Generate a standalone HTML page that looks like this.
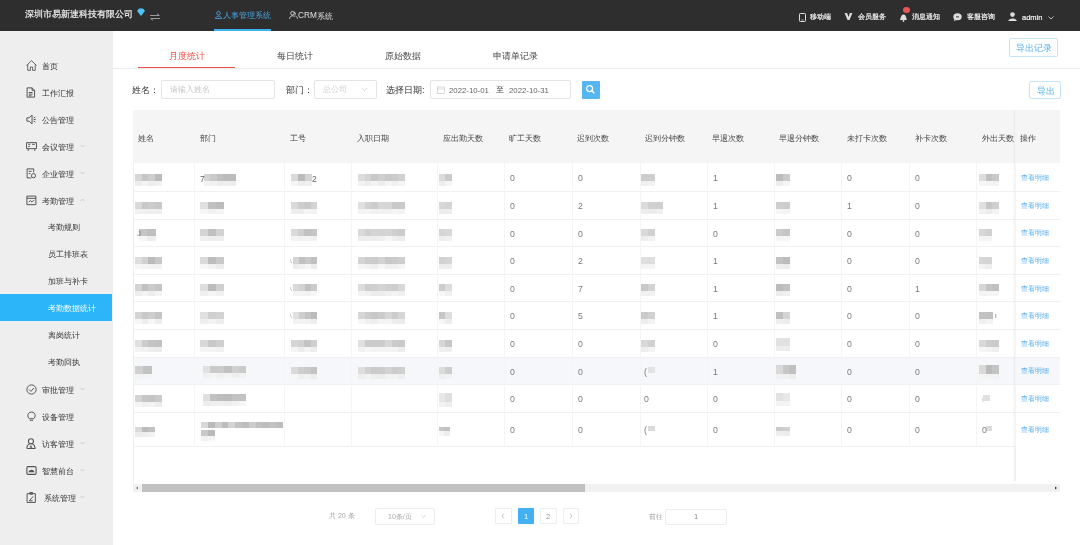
<!DOCTYPE html><html><head><meta charset="utf-8"><style>
html,body{margin:0;padding:0;width:1080px;height:545px;overflow:hidden;background:#fff;font-family:"Liberation Sans",sans-serif;}
.t{position:absolute;white-space:nowrap;will-change:transform;}
.b{position:absolute;box-sizing:border-box;}
svg{position:absolute;overflow:visible;}
.bl{position:absolute;background:#cfcfcf;filter:blur(0.8px);}
#root{position:absolute;left:-3px;top:-3px;width:1086px;height:551px;background:#fff;filter:blur(0.3px);}
#in{position:absolute;left:3px;top:3px;width:1080px;height:545px;}
</style></head><body><div id="root"><div id="in">
<div class="b" style="left:-3px;top:-3px;width:1086px;height:34px;background:#2e2e2e;"></div>
<div class="t" style="left:25px;top:9.40px;font-size:9px;line-height:10.80px;color:#f0f0f0;-webkit-text-stroke:0.2px #f0f0f0;">深圳市易新速科技有限公司</div>
<svg style="left:136px;top:8px" width="10" height="9" viewBox="0 0 10 9"><path d="M1 3 L3 0.5 H7 L9 3 L5 8 Z" fill="#4fc3f7"/></svg>
<svg style="left:149px;top:13px" width="12" height="8" viewBox="0 0 12 8"><path d="M1 2.5 H10 M8 0.8 L10.5 2.5 M11 5.5 H2 M4 7.2 L1.5 5.5" stroke="#9a9a9a" stroke-width="1" fill="none"/></svg>
<svg style="left:214.5px;top:11px" width="7" height="8" viewBox="0 0 7 8"><circle cx="3.5" cy="2.2" r="1.8" stroke="#4aa6e2" stroke-width="0.9" fill="none"/><path d="M0.5 7.5 C0.5 4.5 6.5 4.5 6.5 7.5 Z" stroke="#4aa6e2" stroke-width="0.9" fill="none"/></svg>
<div class="t" style="left:223.2px;top:11.30px;font-size:8px;line-height:9.60px;color:#4aa6e2;">人事管理系统</div>
<div class="b" style="left:214px;top:29px;width:57px;height:2px;background:#3cb2f0;"></div>
<svg style="left:289px;top:11px" width="9" height="8" viewBox="0 0 9 8"><circle cx="3.5" cy="2.2" r="1.8" stroke="#ddd" stroke-width="0.9" fill="none"/><path d="M0.5 7.8 C0.8 4.8 4 4.2 5.5 5.5 M5 1 C6.8 1.2 6.8 3.8 5.5 4.2 M6.5 5 C7.8 5.5 8.5 6.5 8.5 7.8" stroke="#ddd" stroke-width="0.9" fill="none"/></svg>
<div class="t" style="left:297.7px;top:11.02px;font-size:8.3px;line-height:9.96px;color:#e0e0e0;">CRM</div>
<div class="t" style="left:316.5px;top:11.50px;font-size:8px;line-height:9.60px;color:#e0e0e0;">系统</div>
<svg style="left:799px;top:12.5px" width="7" height="9" viewBox="0 0 7 9"><rect x="0.5" y="0.5" width="6" height="8" rx="0.8" stroke="#ddd" stroke-width="1" fill="none"/><line x1="2.5" y1="7" x2="4.5" y2="7" stroke="#ddd" stroke-width="0.8"/></svg>
<div class="t" style="left:810px;top:13.30px;font-size:7px;line-height:8.40px;color:#f2f2f2;-webkit-text-stroke:0.2px #f2f2f2;">移动端</div>
<svg style="left:844px;top:13px" width="9" height="7" viewBox="0 0 10 9"><path d="M0 0 H3.2 L5 5.2 L6.8 0 H10 L6.3 9 H3.7 Z" fill="#ddd"/></svg>
<div class="t" style="left:858px;top:13.30px;font-size:7px;line-height:8.40px;color:#f2f2f2;-webkit-text-stroke:0.2px #f2f2f2;">会员服务</div>
<svg style="left:899px;top:11.5px" width="9" height="10" viewBox="0 0 9 10"><path d="M1 8 C2 6 1.5 3 4.5 2.5 C7.5 3 7 6 8 8 Z" fill="#ddd"/><circle cx="4.5" cy="9" r="0.9" fill="#ddd"/></svg>
<div class="b" style="left:903px;top:6.5px;width:7px;height:6.5px;border-radius:50%;background:#e8545a;"></div>
<div class="t" style="left:912px;top:13.30px;font-size:7px;line-height:8.40px;color:#f2f2f2;-webkit-text-stroke:0.2px #f2f2f2;">消息通知</div>
<svg style="left:953px;top:13px" width="9" height="8" viewBox="0 0 9 8"><ellipse cx="4.5" cy="3.8" rx="4.2" ry="3.5" fill="#ddd"/><path d="M1.5 6 L0.8 8 L3.5 7" fill="#ddd"/><rect x="3" y="3" width="3" height="1.6" fill="#777"/></svg>
<div class="t" style="left:967px;top:13.30px;font-size:7px;line-height:8.40px;color:#f2f2f2;-webkit-text-stroke:0.2px #f2f2f2;">客服咨询</div>
<svg style="left:1008px;top:11.5px" width="9" height="9" viewBox="0 0 9 9"><circle cx="4.5" cy="2.6" r="2.3" fill="#ddd"/><path d="M0.3 9 C0.5 5.5 8.5 5.5 8.7 9 Z" fill="#ddd"/></svg>
<div class="t" style="left:1022px;top:13.30px;font-size:7.5px;line-height:9.00px;color:#f2f2f2;-webkit-text-stroke:0.2px #f2f2f2;">admin</div>
<svg style="left:1048px;top:15.5px" width="6" height="4" viewBox="0 0 6 4"><path d="M0.5 0.5 L3 3 L5.5 0.5" stroke="#ccc" stroke-width="0.9" fill="none"/></svg>
<div class="b" style="left:-3px;top:31px;width:116px;height:517px;background:#eeeeee;"></div>
<svg style="left:26px;top:60px" width="11" height="11" viewBox="0 0 10 10"><path d="M0.4 5 L5 0.6 L9.6 5 M1.6 3.9 V9.4 H4 V6.4 H6 V9.4 H8.4 V3.9" stroke="#555" stroke-width="0.8" fill="none" stroke-linejoin="miter"/></svg>
<div class="t" style="left:42px;top:61.70px;font-size:8px;line-height:9.60px;color:#333;">首页</div>
<svg style="left:26px;top:87px" width="11" height="11" viewBox="0 0 10 10"><path d="M1 0.8 H5.5 L7.8 3 V9.2 H1 Z M5.5 0.8 V3 H7.8 M2.5 5 H6 M2.5 6.5 H6 M2.5 8 H5" stroke="#555" stroke-width="0.9" fill="none"/></svg>
<div class="t" style="left:42px;top:88.70px;font-size:8px;line-height:9.60px;color:#333;">工作汇报</div>
<svg style="left:26px;top:114px" width="11" height="11" viewBox="0 0 10 10"><path d="M0.8 3.5 H2.8 L5.5 1 V9 L2.8 6.5 H0.8 Z M7 3.5 L8.5 2.8 M7 5 H8.8 M7 6.5 L8.5 7.2" stroke="#555" stroke-width="0.9" fill="none"/></svg>
<div class="t" style="left:42px;top:115.70px;font-size:8px;line-height:9.60px;color:#333;">公告管理</div>
<svg style="left:26px;top:141px" width="11" height="11" viewBox="0 0 10 10"><path d="M0.5 1.5 H9.5 V7 H0.5 Z M2 7 V9 M8 7 V9 M2 3 H4 M5.5 3 H8 M2 5 H3.5" stroke="#555" stroke-width="0.9" fill="none"/></svg>
<div class="t" style="left:42px;top:142.70px;font-size:8px;line-height:9.60px;color:#333;">会议管理</div>
<svg style="left:80px;top:144px" width="5" height="4" viewBox="0 0 5 4"><path d="M0.5 1 L2.5 3 L4.5 1" stroke="#bbb" stroke-width="0.7" fill="none"/></svg>
<svg style="left:26px;top:168px" width="11" height="11" viewBox="0 0 10 10"><path d="M1 0.8 H7 V4 M1 0.8 V9 H5 M2.5 3 H5 M2.5 5 H4" stroke="#555" stroke-width="0.9" fill="none"/><circle cx="6.8" cy="7" r="1.9" stroke="#555" stroke-width="0.9" fill="none"/></svg>
<div class="t" style="left:42px;top:169.70px;font-size:8px;line-height:9.60px;color:#333;">企业管理</div>
<svg style="left:80px;top:171px" width="5" height="4" viewBox="0 0 5 4"><path d="M0.5 1 L2.5 3 L4.5 1" stroke="#bbb" stroke-width="0.7" fill="none"/></svg>
<svg style="left:26px;top:195px" width="11" height="11" viewBox="0 0 10 10"><path d="M0.8 1 H9 V8.8 H0.8 Z M0.8 3 H9 M2.5 6.5 L4 5 L5.5 6.5 L7.5 4.5" stroke="#555" stroke-width="0.9" fill="none"/></svg>
<div class="t" style="left:42px;top:196.70px;font-size:8px;line-height:9.60px;color:#333;">考勤管理</div>
<svg style="left:80px;top:198px" width="5" height="4" viewBox="0 0 5 4"><path d="M0.5 3 L2.5 1 L4.5 3" stroke="#bbb" stroke-width="0.7" fill="none"/></svg>
<svg style="left:26px;top:384px" width="11" height="11" viewBox="0 0 10 10"><circle cx="5" cy="5" r="4.2" stroke="#555" stroke-width="0.9" fill="none"/><path d="M2.8 5 L4.5 6.7 L7.3 3.6" stroke="#555" stroke-width="0.9" fill="none"/></svg>
<div class="t" style="left:42px;top:385.70px;font-size:8px;line-height:9.60px;color:#333;">审批管理</div>
<svg style="left:80px;top:387px" width="5" height="4" viewBox="0 0 5 4"><path d="M0.5 1 L2.5 3 L4.5 1" stroke="#bbb" stroke-width="0.7" fill="none"/></svg>
<svg style="left:26px;top:411px" width="11" height="11" viewBox="0 0 10 10"><path d="M3 7 C1 5.5 1 1 5 1 C9 1 9 5.5 7 7 Z M3.5 8.5 H6.5" stroke="#555" stroke-width="0.9" fill="none"/></svg>
<div class="t" style="left:42px;top:412.70px;font-size:8px;line-height:9.60px;color:#333;">设备管理</div>
<svg style="left:26px;top:438px" width="11" height="11" viewBox="0 0 10 10"><circle cx="4.5" cy="3" r="2.3" stroke="#555" stroke-width="1" fill="none"/><path d="M0.8 9.5 C0.8 6.3 2.5 5.6 3.2 5.4 M5.8 5.4 C6.5 5.6 8.2 6.3 8.2 9.5 H0.8" stroke="#555" stroke-width="1" fill="none"/><path d="M3.5 9.5 L4.5 7 L5.5 9.5" stroke="#555" stroke-width="0.8" fill="none"/></svg>
<div class="t" style="left:42px;top:439.70px;font-size:8px;line-height:9.60px;color:#333;">访客管理</div>
<svg style="left:80px;top:441px" width="5" height="4" viewBox="0 0 5 4"><path d="M0.5 1 L2.5 3 L4.5 1" stroke="#bbb" stroke-width="0.7" fill="none"/></svg>
<svg style="left:26px;top:465px" width="11" height="11" viewBox="0 0 10 10"><rect x="0.8" y="1.5" width="8.4" height="7" rx="1" stroke="#555" stroke-width="1" fill="none"/><path d="M2.2 6.5 C3 3.5 7 3.5 7.8 6.5 Z" fill="#555"/></svg>
<div class="t" style="left:42px;top:466.70px;font-size:8px;line-height:9.60px;color:#333;">智慧前台</div>
<svg style="left:80px;top:468px" width="5" height="4" viewBox="0 0 5 4"><path d="M0.5 1 L2.5 3 L4.5 1" stroke="#bbb" stroke-width="0.7" fill="none"/></svg>
<svg style="left:26px;top:492px" width="11" height="11" viewBox="0 0 10 10"><path d="M1 1.5 H8.5 V9.5 H1 Z M3.5 0.5 H6 V2 H3.5 Z M3 8 L6.5 4 M3 8 H6" stroke="#555" stroke-width="0.9" fill="none"/></svg>
<div class="t" style="left:44px;top:493.70px;font-size:8px;line-height:9.60px;color:#333;">系统管理</div>
<svg style="left:80px;top:495px" width="5" height="4" viewBox="0 0 5 4"><path d="M0.5 1 L2.5 3 L4.5 1" stroke="#bbb" stroke-width="0.7" fill="none"/></svg>
<div class="b" style="left:-3px;top:294px;width:115px;height:27px;background:#2db5f9;"></div>
<div class="t" style="left:48px;top:223.30px;font-size:8px;line-height:9.60px;color:#333;">考勤规则</div>
<div class="t" style="left:48px;top:250.30px;font-size:8px;line-height:9.60px;color:#333;">员工排班表</div>
<div class="t" style="left:48px;top:277.30px;font-size:8px;line-height:9.60px;color:#333;">加班与补卡</div>
<div class="t" style="left:48px;top:304.30px;font-size:8px;line-height:9.60px;color:#fff;">考勤数据统计</div>
<div class="t" style="left:48px;top:331.30px;font-size:8px;line-height:9.60px;color:#333;">离岗统计</div>
<div class="t" style="left:48px;top:358.30px;font-size:8px;line-height:9.60px;color:#333;">考勤回执</div>
<div class="b" style="left:113px;top:68px;width:967px;height:1px;background:#ececec;"></div>
<div class="t" style="left:169px;top:50.60px;font-size:9px;line-height:10.80px;color:#ef4b3f;">月度统计</div>
<div class="b" style="left:138px;top:66.5px;width:97px;height:1.5px;background:#ec5247;"></div>
<div class="t" style="left:277px;top:50.60px;font-size:9px;line-height:10.80px;color:#444;">每日统计</div>
<div class="t" style="left:385px;top:50.60px;font-size:9px;line-height:10.80px;color:#444;">原始数据</div>
<div class="t" style="left:493px;top:50.60px;font-size:9px;line-height:10.80px;color:#444;">申请单记录</div>
<div class="b" style="left:1009px;top:38px;width:49px;height:18.5px;border:1px solid #c4e4f8;border-radius:2px;"></div>
<div class="t" style="left:1016px;top:43.30px;font-size:9px;line-height:10.80px;color:#4fb0ef;">导出记录</div>
<div class="t" style="left:131.5px;top:85.30px;font-size:9px;line-height:10.80px;color:#333;">姓名：</div>
<div class="b" style="left:161px;top:80px;width:114px;height:18.5px;border:1px solid #e4e4e4;border-radius:2px;"></div>
<div class="t" style="left:170px;top:85.20px;font-size:8px;line-height:9.60px;color:#c4c4c4;">请输入姓名</div>
<div class="t" style="left:286px;top:85.30px;font-size:9px;line-height:10.80px;color:#333;">部门：</div>
<div class="b" style="left:314px;top:80px;width:62.5px;height:18.5px;border:1px solid #e4e4e4;border-radius:2px;"></div>
<div class="t" style="left:322.5px;top:85.20px;font-size:8px;line-height:9.60px;color:#cfcfcf;">总公司</div>
<svg style="left:361px;top:87px" width="7" height="5" viewBox="0 0 7 5"><path d="M0.8 1 L3.5 3.7 L6.2 1" stroke="#c8c8c8" stroke-width="0.8" fill="none"/></svg>
<div class="t" style="left:386px;top:85.30px;font-size:9px;line-height:10.80px;color:#333;">选择日期:</div>
<div class="b" style="left:430px;top:80px;width:140.5px;height:18.5px;border:1px solid #e4e4e4;border-radius:2px;"></div>
<svg style="left:436.5px;top:85.5px" width="8" height="8" viewBox="0 0 8 8"><rect x="0.5" y="1" width="7" height="6.5" stroke="#cfcfcf" stroke-width="0.8" fill="none"/><line x1="0.5" y1="3" x2="7.5" y2="3" stroke="#cfcfcf" stroke-width="0.8"/></svg>
<div class="t" style="left:449px;top:85.62px;font-size:7.8px;line-height:9.36px;color:#666;">2022-10-01</div>
<div class="t" style="left:496px;top:85.20px;font-size:8px;line-height:9.60px;color:#444;">至</div>
<div class="t" style="left:509px;top:85.62px;font-size:7.8px;line-height:9.36px;color:#666;">2022-10-31</div>
<div class="b" style="left:581.5px;top:81px;width:18.5px;height:17.5px;background:#55b6f2;border-radius:1px;"></div>
<svg style="left:585px;top:84px" width="11" height="11" viewBox="0 0 11 11"><circle cx="4.6" cy="4.6" r="3" stroke="#fff" stroke-width="1.2" fill="none"/><line x1="6.8" y1="6.8" x2="9.3" y2="9.3" stroke="#fff" stroke-width="1.4"/></svg>
<div class="b" style="left:1029px;top:81px;width:32px;height:17.5px;border:1px solid #c4e4f8;border-radius:2px;"></div>
<div class="t" style="left:1036.5px;top:85.60px;font-size:9px;line-height:10.80px;color:#4fb0ef;">导出</div>
<div class="b" style="left:132.5px;top:109.5px;width:927.0px;height:53.80000000000001px;background:#f5f5f5;"></div>
<div class="t" style="left:138.1px;top:133.50px;font-size:8px;line-height:9.60px;color:#454545;">姓名</div>
<div class="t" style="left:200.0px;top:133.50px;font-size:8px;line-height:9.60px;color:#454545;">部门</div>
<div class="t" style="left:290.0px;top:133.50px;font-size:8px;line-height:9.60px;color:#454545;">工号</div>
<div class="t" style="left:357.0px;top:133.50px;font-size:8px;line-height:9.60px;color:#454545;">入职日期</div>
<div class="t" style="left:442.6px;top:133.50px;font-size:8px;line-height:9.60px;color:#454545;">应出勤天数</div>
<div class="t" style="left:509.1px;top:133.50px;font-size:8px;line-height:9.60px;color:#454545;">旷工天数</div>
<div class="t" style="left:577.1px;top:133.50px;font-size:8px;line-height:9.60px;color:#454545;">迟到次数</div>
<div class="t" style="left:645.1px;top:133.50px;font-size:8px;line-height:9.60px;color:#454545;">迟到分钟数</div>
<div class="t" style="left:712.1px;top:133.50px;font-size:8px;line-height:9.60px;color:#454545;">早退次数</div>
<div class="t" style="left:779.1px;top:133.50px;font-size:8px;line-height:9.60px;color:#454545;">早退分钟数</div>
<div class="t" style="left:846.6px;top:133.50px;font-size:8px;line-height:9.60px;color:#454545;">未打卡次数</div>
<div class="t" style="left:914.6px;top:133.50px;font-size:8px;line-height:9.60px;color:#454545;">补卡次数</div>
<div class="t" style="left:981.9px;top:133.50px;font-size:8px;line-height:9.60px;color:#454545;">外出天数</div>
<div class="t" style="left:1020.1px;top:133.50px;font-size:8px;line-height:9.60px;color:#454545;">操作</div>
<div class="b" style="left:132.5px;top:356.5px;width:927.0px;height:27.600000000000023px;background:#f5f7fa;"></div>
<div class="b" style="left:132.5px;top:190.9px;width:927.0px;height:1.0px;background:#f1f1f1;"></div>
<div class="b" style="left:132.5px;top:218.5px;width:927.0px;height:1.0px;background:#f1f1f1;"></div>
<div class="b" style="left:132.5px;top:246.10000000000002px;width:927.0px;height:1.0px;background:#f1f1f1;"></div>
<div class="b" style="left:132.5px;top:273.70000000000005px;width:927.0px;height:1.0px;background:#f1f1f1;"></div>
<div class="b" style="left:132.5px;top:301.3px;width:927.0px;height:1.0px;background:#f1f1f1;"></div>
<div class="b" style="left:132.5px;top:328.90000000000003px;width:927.0px;height:1.0px;background:#f1f1f1;"></div>
<div class="b" style="left:132.5px;top:356.5px;width:927.0px;height:1.0px;background:#f1f1f1;"></div>
<div class="b" style="left:132.5px;top:384.1px;width:927.0px;height:1.0px;background:#f1f1f1;"></div>
<div class="b" style="left:132.5px;top:411.70000000000005px;width:927.0px;height:1.0px;background:#f1f1f1;"></div>
<div class="b" style="left:132.5px;top:446px;width:927.0px;height:1px;background:#f1f1f1;"></div>
<div class="b" style="left:194.4px;top:163.3px;width:1.0px;height:282.7px;background:#f5f5f5;"></div>
<div class="b" style="left:284.4px;top:163.3px;width:1.0px;height:282.7px;background:#f5f5f5;"></div>
<div class="b" style="left:351.4px;top:163.3px;width:1.0px;height:282.7px;background:#f5f5f5;"></div>
<div class="b" style="left:437px;top:163.3px;width:1px;height:282.7px;background:#f5f5f5;"></div>
<div class="b" style="left:503.5px;top:163.3px;width:1.0px;height:282.7px;background:#f5f5f5;"></div>
<div class="b" style="left:571.5px;top:163.3px;width:1.0px;height:282.7px;background:#f5f5f5;"></div>
<div class="b" style="left:639.5px;top:163.3px;width:1.0px;height:282.7px;background:#f5f5f5;"></div>
<div class="b" style="left:706.5px;top:163.3px;width:1.0px;height:282.7px;background:#f5f5f5;"></div>
<div class="b" style="left:773.5px;top:163.3px;width:1.0px;height:282.7px;background:#f5f5f5;"></div>
<div class="b" style="left:841px;top:163.3px;width:1px;height:282.7px;background:#f5f5f5;"></div>
<div class="b" style="left:909px;top:163.3px;width:1px;height:282.7px;background:#f5f5f5;"></div>
<div class="b" style="left:976.3px;top:163.3px;width:1.0px;height:282.7px;background:#f5f5f5;"></div>
<div class="b" style="left:1014.5px;top:163.3px;width:1.0px;height:282.7px;background:#f5f5f5;"></div>
<div class="b" style="left:132.5px;top:163.3px;width:1.0px;height:320.7px;background:#eeeeee;"></div>
<div class="t" style="left:509.5px;top:173.48px;font-size:8.7px;line-height:10.44px;color:#7a7a7a;">0</div>
<div class="t" style="left:577.5px;top:173.48px;font-size:8.7px;line-height:10.44px;color:#7a7a7a;">0</div>
<div class="t" style="left:712.5px;top:173.48px;font-size:8.7px;line-height:10.44px;color:#7a7a7a;">1</div>
<div class="t" style="left:847px;top:173.48px;font-size:8.7px;line-height:10.44px;color:#7a7a7a;">0</div>
<div class="t" style="left:915px;top:173.48px;font-size:8.7px;line-height:10.44px;color:#7a7a7a;">0</div>
<div class="t" style="left:1021px;top:174.20px;font-size:7px;line-height:8.40px;color:#5aaeee;">查看明细</div>
<div style="position:absolute;left:135px;top:173.90px;width:27px;height:12px;filter:blur(0.55px)"><div style="position:absolute;left:0;top:0;width:27px;height:7px;background:linear-gradient(to right,rgb(214,214,214) 0.0px,rgb(214,214,214) 6.8px,rgb(198,198,198) 6.8px,rgb(198,198,198) 13.5px,rgb(206,206,206) 13.5px,rgb(206,206,206) 20.2px,rgb(187,187,187) 20.2px,rgb(187,187,187) 27.0px)"></div><div style="position:absolute;left:0;top:7px;width:27px;height:5px;background:linear-gradient(to right,rgb(237,237,237) 0.0px,rgb(237,237,237) 6.8px,rgb(244,244,244) 6.8px,rgb(244,244,244) 13.5px,rgb(237,237,237) 13.5px,rgb(237,237,237) 20.2px,rgb(241,241,241) 20.2px,rgb(241,241,241) 27.0px)"></div></div>
<div style="position:absolute;left:204px;top:173.90px;width:32px;height:12px;filter:blur(0.55px)"><div style="position:absolute;left:0;top:0;width:32px;height:7px;background:linear-gradient(to right,rgb(212,212,212) 0.0px,rgb(212,212,212) 6.4px,rgb(202,202,202) 6.4px,rgb(202,202,202) 12.8px,rgb(192,192,192) 12.8px,rgb(192,192,192) 19.2px,rgb(187,187,187) 19.2px,rgb(187,187,187) 25.6px,rgb(188,188,188) 25.6px,rgb(188,188,188) 32.0px)"></div><div style="position:absolute;left:0;top:7px;width:32px;height:5px;background:linear-gradient(to right,rgb(242,242,242) 0.0px,rgb(242,242,242) 6.4px,rgb(242,242,242) 6.4px,rgb(242,242,242) 12.8px,rgb(237,237,237) 12.8px,rgb(237,237,237) 19.2px,rgb(239,239,239) 19.2px,rgb(239,239,239) 25.6px,rgb(237,237,237) 25.6px,rgb(237,237,237) 32.0px)"></div></div>
<div class="t" style="left:200px;top:173.60px;font-size:8.5px;line-height:10.20px;color:#666;">7</div>
<div style="position:absolute;left:290.5px;top:173.90px;width:21.5px;height:12px;filter:blur(0.55px)"><div style="position:absolute;left:0;top:0;width:21.5px;height:7px;background:linear-gradient(to right,rgb(218,218,218) 0.0px,rgb(218,218,218) 7.2px,rgb(187,187,187) 7.2px,rgb(187,187,187) 14.3px,rgb(212,212,212) 14.3px,rgb(212,212,212) 21.5px)"></div><div style="position:absolute;left:0;top:7px;width:21.5px;height:5px;background:linear-gradient(to right,rgb(245,245,245) 0.0px,rgb(245,245,245) 7.2px,rgb(237,237,237) 7.2px,rgb(237,237,237) 14.3px,rgb(239,239,239) 14.3px,rgb(239,239,239) 21.5px)"></div></div>
<div class="t" style="left:312px;top:173.60px;font-size:8.5px;line-height:10.20px;color:#666;">2</div>
<div style="position:absolute;left:358px;top:173.90px;width:47px;height:12px;filter:blur(0.55px)"><div style="position:absolute;left:0;top:0;width:47px;height:7px;background:linear-gradient(to right,rgb(221,221,221) 0.0px,rgb(221,221,221) 6.7px,rgb(212,212,212) 6.7px,rgb(212,212,212) 13.4px,rgb(201,201,201) 13.4px,rgb(201,201,201) 20.1px,rgb(207,207,207) 20.1px,rgb(207,207,207) 26.9px,rgb(201,201,201) 26.9px,rgb(201,201,201) 33.6px,rgb(204,204,204) 33.6px,rgb(204,204,204) 40.3px,rgb(209,209,209) 40.3px,rgb(209,209,209) 47.0px)"></div><div style="position:absolute;left:0;top:7px;width:47px;height:5px;background:linear-gradient(to right,rgb(242,242,242) 0.0px,rgb(242,242,242) 6.7px,rgb(238,238,238) 6.7px,rgb(238,238,238) 13.4px,rgb(244,244,244) 13.4px,rgb(244,244,244) 20.1px,rgb(237,237,237) 20.1px,rgb(237,237,237) 26.9px,rgb(245,245,245) 26.9px,rgb(245,245,245) 33.6px,rgb(240,240,240) 33.6px,rgb(240,240,240) 40.3px,rgb(244,244,244) 40.3px,rgb(244,244,244) 47.0px)"></div></div>
<div style="position:absolute;left:439px;top:173.90px;width:13px;height:12px;filter:blur(0.55px)"><div style="position:absolute;left:0;top:0;width:13px;height:7px;background:linear-gradient(to right,rgb(219,219,219) 0.0px,rgb(219,219,219) 6.5px,rgb(203,203,203) 6.5px,rgb(203,203,203) 13.0px)"></div><div style="position:absolute;left:0;top:7px;width:13px;height:5px;background:linear-gradient(to right,rgb(237,237,237) 0.0px,rgb(237,237,237) 6.5px,rgb(245,245,245) 6.5px,rgb(245,245,245) 13.0px)"></div></div>
<div style="position:absolute;left:641px;top:173.90px;width:14px;height:12px;filter:blur(0.55px)"><div style="position:absolute;left:0;top:0;width:14px;height:7px;background:linear-gradient(to right,rgb(204,204,204) 0.0px,rgb(204,204,204) 7.0px,rgb(206,206,206) 7.0px,rgb(206,206,206) 14.0px)"></div><div style="position:absolute;left:0;top:7px;width:14px;height:5px;background:linear-gradient(to right,rgb(239,239,239) 0.0px,rgb(239,239,239) 7.0px,rgb(241,241,241) 7.0px,rgb(241,241,241) 14.0px)"></div></div>
<div style="position:absolute;left:776px;top:173.90px;width:14px;height:12px;filter:blur(0.55px)"><div style="position:absolute;left:0;top:0;width:14px;height:7px;background:linear-gradient(to right,rgb(189,189,189) 0.0px,rgb(189,189,189) 7.0px,rgb(203,203,203) 7.0px,rgb(203,203,203) 14.0px)"></div><div style="position:absolute;left:0;top:7px;width:14px;height:5px;background:linear-gradient(to right,rgb(237,237,237) 0.0px,rgb(237,237,237) 7.0px,rgb(245,245,245) 7.0px,rgb(245,245,245) 14.0px)"></div></div>
<div style="position:absolute;left:979px;top:173.90px;width:20px;height:12px;filter:blur(0.55px)"><div style="position:absolute;left:0;top:0;width:20px;height:7px;background:linear-gradient(to right,rgb(221,221,221) 0.0px,rgb(221,221,221) 6.7px,rgb(192,192,192) 6.7px,rgb(192,192,192) 13.3px,rgb(201,201,201) 13.3px,rgb(201,201,201) 20.0px)"></div><div style="position:absolute;left:0;top:7px;width:20px;height:5px;background:linear-gradient(to right,rgb(246,246,246) 0.0px,rgb(246,246,246) 6.7px,rgb(244,244,244) 6.7px,rgb(244,244,244) 13.3px,rgb(242,242,242) 13.3px,rgb(242,242,242) 20.0px)"></div></div>
<div class="t" style="left:509.5px;top:201.08px;font-size:8.7px;line-height:10.44px;color:#7a7a7a;">0</div>
<div class="t" style="left:577.5px;top:201.08px;font-size:8.7px;line-height:10.44px;color:#7a7a7a;">2</div>
<div class="t" style="left:712.5px;top:201.08px;font-size:8.7px;line-height:10.44px;color:#7a7a7a;">1</div>
<div class="t" style="left:847px;top:201.08px;font-size:8.7px;line-height:10.44px;color:#7a7a7a;">1</div>
<div class="t" style="left:915px;top:201.08px;font-size:8.7px;line-height:10.44px;color:#7a7a7a;">0</div>
<div class="t" style="left:1021px;top:201.80px;font-size:7px;line-height:8.40px;color:#5aaeee;">查看明细</div>
<div style="position:absolute;left:135px;top:201.50px;width:27px;height:12px;filter:blur(0.55px)"><div style="position:absolute;left:0;top:0;width:27px;height:7px;background:linear-gradient(to right,rgb(217,217,217) 0.0px,rgb(217,217,217) 6.8px,rgb(200,200,200) 6.8px,rgb(200,200,200) 13.5px,rgb(204,204,204) 13.5px,rgb(204,204,204) 20.2px,rgb(200,200,200) 20.2px,rgb(200,200,200) 27.0px)"></div><div style="position:absolute;left:0;top:7px;width:27px;height:5px;background:linear-gradient(to right,rgb(241,241,241) 0.0px,rgb(241,241,241) 6.8px,rgb(240,240,240) 6.8px,rgb(240,240,240) 13.5px,rgb(239,239,239) 13.5px,rgb(239,239,239) 20.2px,rgb(238,238,238) 20.2px,rgb(238,238,238) 27.0px)"></div></div>
<div style="position:absolute;left:200px;top:201.50px;width:24px;height:12px;filter:blur(0.55px)"><div style="position:absolute;left:0;top:0;width:24px;height:7px;background:linear-gradient(to right,rgb(224,224,224) 0.0px,rgb(224,224,224) 8.0px,rgb(193,193,193) 8.0px,rgb(193,193,193) 16.0px,rgb(188,188,188) 16.0px,rgb(188,188,188) 24.0px)"></div><div style="position:absolute;left:0;top:7px;width:24px;height:5px;background:linear-gradient(to right,rgb(245,245,245) 0.0px,rgb(245,245,245) 8.0px,rgb(240,240,240) 8.0px,rgb(240,240,240) 16.0px,rgb(244,244,244) 16.0px,rgb(244,244,244) 24.0px)"></div></div>
<div style="position:absolute;left:290.5px;top:201.50px;width:26.5px;height:12px;filter:blur(0.55px)"><div style="position:absolute;left:0;top:0;width:26.5px;height:7px;background:linear-gradient(to right,rgb(217,217,217) 0.0px,rgb(217,217,217) 6.6px,rgb(206,206,206) 6.6px,rgb(206,206,206) 13.2px,rgb(201,201,201) 13.2px,rgb(201,201,201) 19.9px,rgb(211,211,211) 19.9px,rgb(211,211,211) 26.5px)"></div><div style="position:absolute;left:0;top:7px;width:26.5px;height:5px;background:linear-gradient(to right,rgb(237,237,237) 0.0px,rgb(237,237,237) 6.6px,rgb(237,237,237) 6.6px,rgb(237,237,237) 13.2px,rgb(244,244,244) 13.2px,rgb(244,244,244) 19.9px,rgb(242,242,242) 19.9px,rgb(242,242,242) 26.5px)"></div></div>
<div style="position:absolute;left:358px;top:201.50px;width:47px;height:12px;filter:blur(0.55px)"><div style="position:absolute;left:0;top:0;width:47px;height:7px;background:linear-gradient(to right,rgb(224,224,224) 0.0px,rgb(224,224,224) 6.7px,rgb(210,210,210) 6.7px,rgb(210,210,210) 13.4px,rgb(204,204,204) 13.4px,rgb(204,204,204) 20.1px,rgb(215,215,215) 20.1px,rgb(215,215,215) 26.9px,rgb(213,213,213) 26.9px,rgb(213,213,213) 33.6px,rgb(201,201,201) 33.6px,rgb(201,201,201) 40.3px,rgb(202,202,202) 40.3px,rgb(202,202,202) 47.0px)"></div><div style="position:absolute;left:0;top:7px;width:47px;height:5px;background:linear-gradient(to right,rgb(244,244,244) 0.0px,rgb(244,244,244) 6.7px,rgb(245,245,245) 6.7px,rgb(245,245,245) 13.4px,rgb(241,241,241) 13.4px,rgb(241,241,241) 20.1px,rgb(241,241,241) 20.1px,rgb(241,241,241) 26.9px,rgb(241,241,241) 26.9px,rgb(241,241,241) 33.6px,rgb(245,245,245) 33.6px,rgb(245,245,245) 40.3px,rgb(243,243,243) 40.3px,rgb(243,243,243) 47.0px)"></div></div>
<div style="position:absolute;left:439px;top:201.50px;width:13px;height:12px;filter:blur(0.55px)"><div style="position:absolute;left:0;top:0;width:13px;height:7px;background:linear-gradient(to right,rgb(216,216,216) 0.0px,rgb(216,216,216) 6.5px,rgb(212,212,212) 6.5px,rgb(212,212,212) 13.0px)"></div><div style="position:absolute;left:0;top:7px;width:13px;height:5px;background:linear-gradient(to right,rgb(237,237,237) 0.0px,rgb(237,237,237) 6.5px,rgb(237,237,237) 6.5px,rgb(237,237,237) 13.0px)"></div></div>
<div style="position:absolute;left:641px;top:201.50px;width:22px;height:12px;filter:blur(0.55px)"><div style="position:absolute;left:0;top:0;width:22px;height:7px;background:linear-gradient(to right,rgb(219,219,219) 0.0px,rgb(219,219,219) 7.3px,rgb(208,208,208) 7.3px,rgb(208,208,208) 14.7px,rgb(207,207,207) 14.7px,rgb(207,207,207) 22.0px)"></div><div style="position:absolute;left:0;top:7px;width:22px;height:5px;background:linear-gradient(to right,rgb(237,237,237) 0.0px,rgb(237,237,237) 7.3px,rgb(236,236,236) 7.3px,rgb(236,236,236) 14.7px,rgb(240,240,240) 14.7px,rgb(240,240,240) 22.0px)"></div></div>
<div style="position:absolute;left:776px;top:201.50px;width:14px;height:12px;filter:blur(0.55px)"><div style="position:absolute;left:0;top:0;width:14px;height:7px;background:linear-gradient(to right,rgb(206,206,206) 0.0px,rgb(206,206,206) 7.0px,rgb(204,204,204) 7.0px,rgb(204,204,204) 14.0px)"></div><div style="position:absolute;left:0;top:7px;width:14px;height:5px;background:linear-gradient(to right,rgb(246,246,246) 0.0px,rgb(246,246,246) 7.0px,rgb(243,243,243) 7.0px,rgb(243,243,243) 14.0px)"></div></div>
<div style="position:absolute;left:979px;top:201.50px;width:20px;height:12px;filter:blur(0.55px)"><div style="position:absolute;left:0;top:0;width:20px;height:7px;background:linear-gradient(to right,rgb(223,223,223) 0.0px,rgb(223,223,223) 6.7px,rgb(198,198,198) 6.7px,rgb(198,198,198) 13.3px,rgb(207,207,207) 13.3px,rgb(207,207,207) 20.0px)"></div><div style="position:absolute;left:0;top:7px;width:20px;height:5px;background:linear-gradient(to right,rgb(241,241,241) 0.0px,rgb(241,241,241) 6.7px,rgb(236,236,236) 6.7px,rgb(236,236,236) 13.3px,rgb(243,243,243) 13.3px,rgb(243,243,243) 20.0px)"></div></div>
<div class="t" style="left:509.5px;top:228.68px;font-size:8.7px;line-height:10.44px;color:#7a7a7a;">0</div>
<div class="t" style="left:577.5px;top:228.68px;font-size:8.7px;line-height:10.44px;color:#7a7a7a;">0</div>
<div class="t" style="left:712.5px;top:228.68px;font-size:8.7px;line-height:10.44px;color:#7a7a7a;">0</div>
<div class="t" style="left:847px;top:228.68px;font-size:8.7px;line-height:10.44px;color:#7a7a7a;">0</div>
<div class="t" style="left:915px;top:228.68px;font-size:8.7px;line-height:10.44px;color:#7a7a7a;">0</div>
<div class="t" style="left:1021px;top:229.40px;font-size:7px;line-height:8.40px;color:#5aaeee;">查看明细</div>
<div style="position:absolute;left:139px;top:229.10px;width:17px;height:12px;filter:blur(0.55px)"><div style="position:absolute;left:0;top:0;width:17px;height:7px;background:linear-gradient(to right,rgb(197,197,197) 0.0px,rgb(197,197,197) 8.5px,rgb(191,191,191) 8.5px,rgb(191,191,191) 17.0px)"></div><div style="position:absolute;left:0;top:7px;width:17px;height:5px;background:linear-gradient(to right,rgb(245,245,245) 0.0px,rgb(245,245,245) 8.5px,rgb(237,237,237) 8.5px,rgb(237,237,237) 17.0px)"></div></div>
<div class="t" style="left:137px;top:229.10px;font-size:8px;line-height:9.60px;color:#777;">J</div>
<div style="position:absolute;left:200px;top:229.10px;width:24px;height:12px;filter:blur(0.55px)"><div style="position:absolute;left:0;top:0;width:24px;height:7px;background:linear-gradient(to right,rgb(212,212,212) 0.0px,rgb(212,212,212) 8.0px,rgb(192,192,192) 8.0px,rgb(192,192,192) 16.0px,rgb(210,210,210) 16.0px,rgb(210,210,210) 24.0px)"></div><div style="position:absolute;left:0;top:7px;width:24px;height:5px;background:linear-gradient(to right,rgb(240,240,240) 0.0px,rgb(240,240,240) 8.0px,rgb(238,238,238) 8.0px,rgb(238,238,238) 16.0px,rgb(239,239,239) 16.0px,rgb(239,239,239) 24.0px)"></div></div>
<div style="position:absolute;left:290.5px;top:229.10px;width:26.5px;height:12px;filter:blur(0.55px)"><div style="position:absolute;left:0;top:0;width:26.5px;height:7px;background:linear-gradient(to right,rgb(218,218,218) 0.0px,rgb(218,218,218) 6.6px,rgb(207,207,207) 6.6px,rgb(207,207,207) 13.2px,rgb(194,194,194) 13.2px,rgb(194,194,194) 19.9px,rgb(197,197,197) 19.9px,rgb(197,197,197) 26.5px)"></div><div style="position:absolute;left:0;top:7px;width:26.5px;height:5px;background:linear-gradient(to right,rgb(243,243,243) 0.0px,rgb(243,243,243) 6.6px,rgb(242,242,242) 6.6px,rgb(242,242,242) 13.2px,rgb(244,244,244) 13.2px,rgb(244,244,244) 19.9px,rgb(240,240,240) 19.9px,rgb(240,240,240) 26.5px)"></div></div>
<div style="position:absolute;left:358px;top:229.10px;width:47px;height:12px;filter:blur(0.55px)"><div style="position:absolute;left:0;top:0;width:47px;height:7px;background:linear-gradient(to right,rgb(218,218,218) 0.0px,rgb(218,218,218) 6.7px,rgb(208,208,208) 6.7px,rgb(208,208,208) 13.4px,rgb(213,213,213) 13.4px,rgb(213,213,213) 20.1px,rgb(211,211,211) 20.1px,rgb(211,211,211) 26.9px,rgb(212,212,212) 26.9px,rgb(212,212,212) 33.6px,rgb(207,207,207) 33.6px,rgb(207,207,207) 40.3px,rgb(204,204,204) 40.3px,rgb(204,204,204) 47.0px)"></div><div style="position:absolute;left:0;top:7px;width:47px;height:5px;background:linear-gradient(to right,rgb(237,237,237) 0.0px,rgb(237,237,237) 6.7px,rgb(238,238,238) 6.7px,rgb(238,238,238) 13.4px,rgb(238,238,238) 13.4px,rgb(238,238,238) 20.1px,rgb(239,239,239) 20.1px,rgb(239,239,239) 26.9px,rgb(246,246,246) 26.9px,rgb(246,246,246) 33.6px,rgb(239,239,239) 33.6px,rgb(239,239,239) 40.3px,rgb(236,236,236) 40.3px,rgb(236,236,236) 47.0px)"></div></div>
<div style="position:absolute;left:439px;top:229.10px;width:13px;height:12px;filter:blur(0.55px)"><div style="position:absolute;left:0;top:0;width:13px;height:7px;background:linear-gradient(to right,rgb(213,213,213) 0.0px,rgb(213,213,213) 6.5px,rgb(216,216,216) 6.5px,rgb(216,216,216) 13.0px)"></div><div style="position:absolute;left:0;top:7px;width:13px;height:5px;background:linear-gradient(to right,rgb(238,238,238) 0.0px,rgb(238,238,238) 6.5px,rgb(240,240,240) 6.5px,rgb(240,240,240) 13.0px)"></div></div>
<div style="position:absolute;left:641px;top:229.10px;width:14px;height:12px;filter:blur(0.55px)"><div style="position:absolute;left:0;top:0;width:14px;height:7px;background:linear-gradient(to right,rgb(217,217,217) 0.0px,rgb(217,217,217) 7.0px,rgb(208,208,208) 7.0px,rgb(208,208,208) 14.0px)"></div><div style="position:absolute;left:0;top:7px;width:14px;height:5px;background:linear-gradient(to right,rgb(238,238,238) 0.0px,rgb(238,238,238) 7.0px,rgb(242,242,242) 7.0px,rgb(242,242,242) 14.0px)"></div></div>
<div style="position:absolute;left:776px;top:229.10px;width:14px;height:12px;filter:blur(0.55px)"><div style="position:absolute;left:0;top:0;width:14px;height:7px;background:linear-gradient(to right,rgb(203,203,203) 0.0px,rgb(203,203,203) 7.0px,rgb(197,197,197) 7.0px,rgb(197,197,197) 14.0px)"></div><div style="position:absolute;left:0;top:7px;width:14px;height:5px;background:linear-gradient(to right,rgb(245,245,245) 0.0px,rgb(245,245,245) 7.0px,rgb(245,245,245) 7.0px,rgb(245,245,245) 14.0px)"></div></div>
<div style="position:absolute;left:979px;top:229.10px;width:13px;height:12px;filter:blur(0.55px)"><div style="position:absolute;left:0;top:0;width:13px;height:7px;background:linear-gradient(to right,rgb(215,215,215) 0.0px,rgb(215,215,215) 6.5px,rgb(209,209,209) 6.5px,rgb(209,209,209) 13.0px)"></div><div style="position:absolute;left:0;top:7px;width:13px;height:5px;background:linear-gradient(to right,rgb(244,244,244) 0.0px,rgb(244,244,244) 6.5px,rgb(245,245,245) 6.5px,rgb(245,245,245) 13.0px)"></div></div>
<div class="t" style="left:509.5px;top:256.28px;font-size:8.7px;line-height:10.44px;color:#7a7a7a;">0</div>
<div class="t" style="left:577.5px;top:256.28px;font-size:8.7px;line-height:10.44px;color:#7a7a7a;">2</div>
<div class="t" style="left:712.5px;top:256.28px;font-size:8.7px;line-height:10.44px;color:#7a7a7a;">1</div>
<div class="t" style="left:847px;top:256.28px;font-size:8.7px;line-height:10.44px;color:#7a7a7a;">0</div>
<div class="t" style="left:915px;top:256.28px;font-size:8.7px;line-height:10.44px;color:#7a7a7a;">0</div>
<div class="t" style="left:1021px;top:257.00px;font-size:7px;line-height:8.40px;color:#5aaeee;">查看明细</div>
<div style="position:absolute;left:135px;top:256.70px;width:27px;height:12px;filter:blur(0.55px)"><div style="position:absolute;left:0;top:0;width:27px;height:7px;background:linear-gradient(to right,rgb(222,222,222) 0.0px,rgb(222,222,222) 6.8px,rgb(209,209,209) 6.8px,rgb(209,209,209) 13.5px,rgb(187,187,187) 13.5px,rgb(187,187,187) 20.2px,rgb(200,200,200) 20.2px,rgb(200,200,200) 27.0px)"></div><div style="position:absolute;left:0;top:7px;width:27px;height:5px;background:linear-gradient(to right,rgb(246,246,246) 0.0px,rgb(246,246,246) 6.8px,rgb(244,244,244) 6.8px,rgb(244,244,244) 13.5px,rgb(242,242,242) 13.5px,rgb(242,242,242) 20.2px,rgb(242,242,242) 20.2px,rgb(242,242,242) 27.0px)"></div></div>
<div style="position:absolute;left:200px;top:256.70px;width:24px;height:12px;filter:blur(0.55px)"><div style="position:absolute;left:0;top:0;width:24px;height:7px;background:linear-gradient(to right,rgb(218,218,218) 0.0px,rgb(218,218,218) 8.0px,rgb(189,189,189) 8.0px,rgb(189,189,189) 16.0px,rgb(201,201,201) 16.0px,rgb(201,201,201) 24.0px)"></div><div style="position:absolute;left:0;top:7px;width:24px;height:5px;background:linear-gradient(to right,rgb(246,246,246) 0.0px,rgb(246,246,246) 8.0px,rgb(242,242,242) 8.0px,rgb(242,242,242) 16.0px,rgb(236,236,236) 16.0px,rgb(236,236,236) 24.0px)"></div></div>
<div style="position:absolute;left:292.5px;top:256.70px;width:24.5px;height:12px;filter:blur(0.55px)"><div style="position:absolute;left:0;top:0;width:24.5px;height:7px;background:linear-gradient(to right,rgb(213,213,213) 0.0px,rgb(213,213,213) 6.1px,rgb(192,192,192) 6.1px,rgb(192,192,192) 12.2px,rgb(200,200,200) 12.2px,rgb(200,200,200) 18.4px,rgb(191,191,191) 18.4px,rgb(191,191,191) 24.5px)"></div><div style="position:absolute;left:0;top:7px;width:24.5px;height:5px;background:linear-gradient(to right,rgb(237,237,237) 0.0px,rgb(237,237,237) 6.1px,rgb(241,241,241) 6.1px,rgb(241,241,241) 12.2px,rgb(245,245,245) 12.2px,rgb(245,245,245) 18.4px,rgb(236,236,236) 18.4px,rgb(236,236,236) 24.5px)"></div></div>
<div class="t" style="left:289.5px;top:257.90px;font-size:6px;line-height:7.20px;color:#999;">\</div>
<div style="position:absolute;left:358px;top:256.70px;width:47px;height:12px;filter:blur(0.55px)"><div style="position:absolute;left:0;top:0;width:47px;height:7px;background:linear-gradient(to right,rgb(212,212,212) 0.0px,rgb(212,212,212) 6.7px,rgb(204,204,204) 6.7px,rgb(204,204,204) 13.4px,rgb(203,203,203) 13.4px,rgb(203,203,203) 20.1px,rgb(211,211,211) 20.1px,rgb(211,211,211) 26.9px,rgb(200,200,200) 26.9px,rgb(200,200,200) 33.6px,rgb(202,202,202) 33.6px,rgb(202,202,202) 40.3px,rgb(206,206,206) 40.3px,rgb(206,206,206) 47.0px)"></div><div style="position:absolute;left:0;top:7px;width:47px;height:5px;background:linear-gradient(to right,rgb(245,245,245) 0.0px,rgb(245,245,245) 6.7px,rgb(242,242,242) 6.7px,rgb(242,242,242) 13.4px,rgb(238,238,238) 13.4px,rgb(238,238,238) 20.1px,rgb(246,246,246) 20.1px,rgb(246,246,246) 26.9px,rgb(240,240,240) 26.9px,rgb(240,240,240) 33.6px,rgb(241,241,241) 33.6px,rgb(241,241,241) 40.3px,rgb(245,245,245) 40.3px,rgb(245,245,245) 47.0px)"></div></div>
<div style="position:absolute;left:439px;top:256.70px;width:13px;height:12px;filter:blur(0.55px)"><div style="position:absolute;left:0;top:0;width:13px;height:7px;background:linear-gradient(to right,rgb(209,209,209) 0.0px,rgb(209,209,209) 6.5px,rgb(213,213,213) 6.5px,rgb(213,213,213) 13.0px)"></div><div style="position:absolute;left:0;top:7px;width:13px;height:5px;background:linear-gradient(to right,rgb(237,237,237) 0.0px,rgb(237,237,237) 6.5px,rgb(237,237,237) 6.5px,rgb(237,237,237) 13.0px)"></div></div>
<div style="position:absolute;left:641px;top:256.70px;width:14px;height:12px;filter:blur(0.55px)"><div style="position:absolute;left:0;top:0;width:14px;height:7px;background:linear-gradient(to right,rgb(223,223,223) 0.0px,rgb(223,223,223) 7.0px,rgb(222,222,222) 7.0px,rgb(222,222,222) 14.0px)"></div><div style="position:absolute;left:0;top:7px;width:14px;height:5px;background:linear-gradient(to right,rgb(243,243,243) 0.0px,rgb(243,243,243) 7.0px,rgb(243,243,243) 7.0px,rgb(243,243,243) 14.0px)"></div></div>
<div style="position:absolute;left:776px;top:256.70px;width:14px;height:12px;filter:blur(0.55px)"><div style="position:absolute;left:0;top:0;width:14px;height:7px;background:linear-gradient(to right,rgb(195,195,195) 0.0px,rgb(195,195,195) 7.0px,rgb(188,188,188) 7.0px,rgb(188,188,188) 14.0px)"></div><div style="position:absolute;left:0;top:7px;width:14px;height:5px;background:linear-gradient(to right,rgb(238,238,238) 0.0px,rgb(238,238,238) 7.0px,rgb(237,237,237) 7.0px,rgb(237,237,237) 14.0px)"></div></div>
<div style="position:absolute;left:979px;top:256.70px;width:13px;height:12px;filter:blur(0.55px)"><div style="position:absolute;left:0;top:0;width:13px;height:7px;background:linear-gradient(to right,rgb(215,215,215) 0.0px,rgb(215,215,215) 6.5px,rgb(213,213,213) 6.5px,rgb(213,213,213) 13.0px)"></div><div style="position:absolute;left:0;top:7px;width:13px;height:5px;background:linear-gradient(to right,rgb(243,243,243) 0.0px,rgb(243,243,243) 6.5px,rgb(238,238,238) 6.5px,rgb(238,238,238) 13.0px)"></div></div>
<div class="t" style="left:509.5px;top:283.88px;font-size:8.7px;line-height:10.44px;color:#7a7a7a;">0</div>
<div class="t" style="left:577.5px;top:283.88px;font-size:8.7px;line-height:10.44px;color:#7a7a7a;">7</div>
<div class="t" style="left:712.5px;top:283.88px;font-size:8.7px;line-height:10.44px;color:#7a7a7a;">1</div>
<div class="t" style="left:847px;top:283.88px;font-size:8.7px;line-height:10.44px;color:#7a7a7a;">0</div>
<div class="t" style="left:915px;top:283.88px;font-size:8.7px;line-height:10.44px;color:#7a7a7a;">1</div>
<div class="t" style="left:1021px;top:284.60px;font-size:7px;line-height:8.40px;color:#5aaeee;">查看明细</div>
<div style="position:absolute;left:135px;top:284.30px;width:27px;height:12px;filter:blur(0.55px)"><div style="position:absolute;left:0;top:0;width:27px;height:7px;background:linear-gradient(to right,rgb(212,212,212) 0.0px,rgb(212,212,212) 6.8px,rgb(192,192,192) 6.8px,rgb(192,192,192) 13.5px,rgb(202,202,202) 13.5px,rgb(202,202,202) 20.2px,rgb(197,197,197) 20.2px,rgb(197,197,197) 27.0px)"></div><div style="position:absolute;left:0;top:7px;width:27px;height:5px;background:linear-gradient(to right,rgb(238,238,238) 0.0px,rgb(238,238,238) 6.8px,rgb(244,244,244) 6.8px,rgb(244,244,244) 13.5px,rgb(236,236,236) 13.5px,rgb(236,236,236) 20.2px,rgb(244,244,244) 20.2px,rgb(244,244,244) 27.0px)"></div></div>
<div style="position:absolute;left:200px;top:284.30px;width:24px;height:12px;filter:blur(0.55px)"><div style="position:absolute;left:0;top:0;width:24px;height:7px;background:linear-gradient(to right,rgb(222,222,222) 0.0px,rgb(222,222,222) 8.0px,rgb(188,188,188) 8.0px,rgb(188,188,188) 16.0px,rgb(208,208,208) 16.0px,rgb(208,208,208) 24.0px)"></div><div style="position:absolute;left:0;top:7px;width:24px;height:5px;background:linear-gradient(to right,rgb(240,240,240) 0.0px,rgb(240,240,240) 8.0px,rgb(244,244,244) 8.0px,rgb(244,244,244) 16.0px,rgb(241,241,241) 16.0px,rgb(241,241,241) 24.0px)"></div></div>
<div style="position:absolute;left:292.5px;top:284.30px;width:24.5px;height:12px;filter:blur(0.55px)"><div style="position:absolute;left:0;top:0;width:24.5px;height:7px;background:linear-gradient(to right,rgb(217,217,217) 0.0px,rgb(217,217,217) 6.1px,rgb(210,210,210) 6.1px,rgb(210,210,210) 12.2px,rgb(193,193,193) 12.2px,rgb(193,193,193) 18.4px,rgb(203,203,203) 18.4px,rgb(203,203,203) 24.5px)"></div><div style="position:absolute;left:0;top:7px;width:24.5px;height:5px;background:linear-gradient(to right,rgb(244,244,244) 0.0px,rgb(244,244,244) 6.1px,rgb(244,244,244) 6.1px,rgb(244,244,244) 12.2px,rgb(241,241,241) 12.2px,rgb(241,241,241) 18.4px,rgb(246,246,246) 18.4px,rgb(246,246,246) 24.5px)"></div></div>
<div class="t" style="left:289.5px;top:285.50px;font-size:6px;line-height:7.20px;color:#999;">\</div>
<div style="position:absolute;left:358px;top:284.30px;width:47px;height:12px;filter:blur(0.55px)"><div style="position:absolute;left:0;top:0;width:47px;height:7px;background:linear-gradient(to right,rgb(221,221,221) 0.0px,rgb(221,221,221) 6.7px,rgb(206,206,206) 6.7px,rgb(206,206,206) 13.4px,rgb(207,207,207) 13.4px,rgb(207,207,207) 20.1px,rgb(212,212,212) 20.1px,rgb(212,212,212) 26.9px,rgb(207,207,207) 26.9px,rgb(207,207,207) 33.6px,rgb(206,206,206) 33.6px,rgb(206,206,206) 40.3px,rgb(216,216,216) 40.3px,rgb(216,216,216) 47.0px)"></div><div style="position:absolute;left:0;top:7px;width:47px;height:5px;background:linear-gradient(to right,rgb(243,243,243) 0.0px,rgb(243,243,243) 6.7px,rgb(241,241,241) 6.7px,rgb(241,241,241) 13.4px,rgb(236,236,236) 13.4px,rgb(236,236,236) 20.1px,rgb(236,236,236) 20.1px,rgb(236,236,236) 26.9px,rgb(240,240,240) 26.9px,rgb(240,240,240) 33.6px,rgb(243,243,243) 33.6px,rgb(243,243,243) 40.3px,rgb(240,240,240) 40.3px,rgb(240,240,240) 47.0px)"></div></div>
<div style="position:absolute;left:439px;top:284.30px;width:13px;height:12px;filter:blur(0.55px)"><div style="position:absolute;left:0;top:0;width:13px;height:7px;background:linear-gradient(to right,rgb(204,204,204) 0.0px,rgb(204,204,204) 6.5px,rgb(220,220,220) 6.5px,rgb(220,220,220) 13.0px)"></div><div style="position:absolute;left:0;top:7px;width:13px;height:5px;background:linear-gradient(to right,rgb(245,245,245) 0.0px,rgb(245,245,245) 6.5px,rgb(241,241,241) 6.5px,rgb(241,241,241) 13.0px)"></div></div>
<div style="position:absolute;left:641px;top:284.30px;width:14px;height:12px;filter:blur(0.55px)"><div style="position:absolute;left:0;top:0;width:14px;height:7px;background:linear-gradient(to right,rgb(200,200,200) 0.0px,rgb(200,200,200) 7.0px,rgb(211,211,211) 7.0px,rgb(211,211,211) 14.0px)"></div><div style="position:absolute;left:0;top:7px;width:14px;height:5px;background:linear-gradient(to right,rgb(241,241,241) 0.0px,rgb(241,241,241) 7.0px,rgb(241,241,241) 7.0px,rgb(241,241,241) 14.0px)"></div></div>
<div style="position:absolute;left:776px;top:284.30px;width:14px;height:12px;filter:blur(0.55px)"><div style="position:absolute;left:0;top:0;width:14px;height:7px;background:linear-gradient(to right,rgb(188,188,188) 0.0px,rgb(188,188,188) 7.0px,rgb(193,193,193) 7.0px,rgb(193,193,193) 14.0px)"></div><div style="position:absolute;left:0;top:7px;width:14px;height:5px;background:linear-gradient(to right,rgb(237,237,237) 0.0px,rgb(237,237,237) 7.0px,rgb(239,239,239) 7.0px,rgb(239,239,239) 14.0px)"></div></div>
<div style="position:absolute;left:979px;top:284.30px;width:20px;height:12px;filter:blur(0.55px)"><div style="position:absolute;left:0;top:0;width:20px;height:7px;background:linear-gradient(to right,rgb(215,215,215) 0.0px,rgb(215,215,215) 6.7px,rgb(196,196,196) 6.7px,rgb(196,196,196) 13.3px,rgb(192,192,192) 13.3px,rgb(192,192,192) 20.0px)"></div><div style="position:absolute;left:0;top:7px;width:20px;height:5px;background:linear-gradient(to right,rgb(243,243,243) 0.0px,rgb(243,243,243) 6.7px,rgb(245,245,245) 6.7px,rgb(245,245,245) 13.3px,rgb(245,245,245) 13.3px,rgb(245,245,245) 20.0px)"></div></div>
<div class="t" style="left:509.5px;top:311.48px;font-size:8.7px;line-height:10.44px;color:#7a7a7a;">0</div>
<div class="t" style="left:577.5px;top:311.48px;font-size:8.7px;line-height:10.44px;color:#7a7a7a;">5</div>
<div class="t" style="left:712.5px;top:311.48px;font-size:8.7px;line-height:10.44px;color:#7a7a7a;">1</div>
<div class="t" style="left:847px;top:311.48px;font-size:8.7px;line-height:10.44px;color:#7a7a7a;">0</div>
<div class="t" style="left:915px;top:311.48px;font-size:8.7px;line-height:10.44px;color:#7a7a7a;">0</div>
<div class="t" style="left:1021px;top:312.20px;font-size:7px;line-height:8.40px;color:#5aaeee;">查看明细</div>
<div style="position:absolute;left:135px;top:311.90px;width:27px;height:12px;filter:blur(0.55px)"><div style="position:absolute;left:0;top:0;width:27px;height:7px;background:linear-gradient(to right,rgb(212,212,212) 0.0px,rgb(212,212,212) 6.8px,rgb(201,201,201) 6.8px,rgb(201,201,201) 13.5px,rgb(206,206,206) 13.5px,rgb(206,206,206) 20.2px,rgb(197,197,197) 20.2px,rgb(197,197,197) 27.0px)"></div><div style="position:absolute;left:0;top:7px;width:27px;height:5px;background:linear-gradient(to right,rgb(246,246,246) 0.0px,rgb(246,246,246) 6.8px,rgb(237,237,237) 6.8px,rgb(237,237,237) 13.5px,rgb(246,246,246) 13.5px,rgb(246,246,246) 20.2px,rgb(237,237,237) 20.2px,rgb(237,237,237) 27.0px)"></div></div>
<div style="position:absolute;left:200px;top:311.90px;width:24px;height:12px;filter:blur(0.55px)"><div style="position:absolute;left:0;top:0;width:24px;height:7px;background:linear-gradient(to right,rgb(224,224,224) 0.0px,rgb(224,224,224) 8.0px,rgb(208,208,208) 8.0px,rgb(208,208,208) 16.0px,rgb(210,210,210) 16.0px,rgb(210,210,210) 24.0px)"></div><div style="position:absolute;left:0;top:7px;width:24px;height:5px;background:linear-gradient(to right,rgb(239,239,239) 0.0px,rgb(239,239,239) 8.0px,rgb(243,243,243) 8.0px,rgb(243,243,243) 16.0px,rgb(238,238,238) 16.0px,rgb(238,238,238) 24.0px)"></div></div>
<div style="position:absolute;left:292.5px;top:311.90px;width:24.5px;height:12px;filter:blur(0.55px)"><div style="position:absolute;left:0;top:0;width:24.5px;height:7px;background:linear-gradient(to right,rgb(224,224,224) 0.0px,rgb(224,224,224) 6.1px,rgb(206,206,206) 6.1px,rgb(206,206,206) 12.2px,rgb(196,196,196) 12.2px,rgb(196,196,196) 18.4px,rgb(188,188,188) 18.4px,rgb(188,188,188) 24.5px)"></div><div style="position:absolute;left:0;top:7px;width:24.5px;height:5px;background:linear-gradient(to right,rgb(242,242,242) 0.0px,rgb(242,242,242) 6.1px,rgb(243,243,243) 6.1px,rgb(243,243,243) 12.2px,rgb(242,242,242) 12.2px,rgb(242,242,242) 18.4px,rgb(237,237,237) 18.4px,rgb(237,237,237) 24.5px)"></div></div>
<div class="t" style="left:289.5px;top:313.10px;font-size:6px;line-height:7.20px;color:#999;">\</div>
<div style="position:absolute;left:358px;top:311.90px;width:47px;height:12px;filter:blur(0.55px)"><div style="position:absolute;left:0;top:0;width:47px;height:7px;background:linear-gradient(to right,rgb(214,214,214) 0.0px,rgb(214,214,214) 6.7px,rgb(204,204,204) 6.7px,rgb(204,204,204) 13.4px,rgb(200,200,200) 13.4px,rgb(200,200,200) 20.1px,rgb(204,204,204) 20.1px,rgb(204,204,204) 26.9px,rgb(214,214,214) 26.9px,rgb(214,214,214) 33.6px,rgb(204,204,204) 33.6px,rgb(204,204,204) 40.3px,rgb(215,215,215) 40.3px,rgb(215,215,215) 47.0px)"></div><div style="position:absolute;left:0;top:7px;width:47px;height:5px;background:linear-gradient(to right,rgb(246,246,246) 0.0px,rgb(246,246,246) 6.7px,rgb(241,241,241) 6.7px,rgb(241,241,241) 13.4px,rgb(238,238,238) 13.4px,rgb(238,238,238) 20.1px,rgb(244,244,244) 20.1px,rgb(244,244,244) 26.9px,rgb(244,244,244) 26.9px,rgb(244,244,244) 33.6px,rgb(238,238,238) 33.6px,rgb(238,238,238) 40.3px,rgb(236,236,236) 40.3px,rgb(236,236,236) 47.0px)"></div></div>
<div style="position:absolute;left:439px;top:311.90px;width:13px;height:12px;filter:blur(0.55px)"><div style="position:absolute;left:0;top:0;width:13px;height:7px;background:linear-gradient(to right,rgb(198,198,198) 0.0px,rgb(198,198,198) 6.5px,rgb(221,221,221) 6.5px,rgb(221,221,221) 13.0px)"></div><div style="position:absolute;left:0;top:7px;width:13px;height:5px;background:linear-gradient(to right,rgb(246,246,246) 0.0px,rgb(246,246,246) 6.5px,rgb(237,237,237) 6.5px,rgb(237,237,237) 13.0px)"></div></div>
<div style="position:absolute;left:641px;top:311.90px;width:14px;height:12px;filter:blur(0.55px)"><div style="position:absolute;left:0;top:0;width:14px;height:7px;background:linear-gradient(to right,rgb(202,202,202) 0.0px,rgb(202,202,202) 7.0px,rgb(209,209,209) 7.0px,rgb(209,209,209) 14.0px)"></div><div style="position:absolute;left:0;top:7px;width:14px;height:5px;background:linear-gradient(to right,rgb(238,238,238) 0.0px,rgb(238,238,238) 7.0px,rgb(242,242,242) 7.0px,rgb(242,242,242) 14.0px)"></div></div>
<div style="position:absolute;left:776px;top:311.90px;width:14px;height:12px;filter:blur(0.55px)"><div style="position:absolute;left:0;top:0;width:14px;height:7px;background:linear-gradient(to right,rgb(192,192,192) 0.0px,rgb(192,192,192) 7.0px,rgb(212,212,212) 7.0px,rgb(212,212,212) 14.0px)"></div><div style="position:absolute;left:0;top:7px;width:14px;height:5px;background:linear-gradient(to right,rgb(239,239,239) 0.0px,rgb(239,239,239) 7.0px,rgb(236,236,236) 7.0px,rgb(236,236,236) 14.0px)"></div></div>
<div style="position:absolute;left:979px;top:311.90px;width:14px;height:12px;filter:blur(0.55px)"><div style="position:absolute;left:0;top:0;width:14px;height:7px;background:linear-gradient(to right,rgb(194,194,194) 0.0px,rgb(194,194,194) 7.0px,rgb(192,192,192) 7.0px,rgb(192,192,192) 14.0px)"></div><div style="position:absolute;left:0;top:7px;width:14px;height:5px;background:linear-gradient(to right,rgb(240,240,240) 0.0px,rgb(240,240,240) 7.0px,rgb(244,244,244) 7.0px,rgb(244,244,244) 14.0px)"></div></div>
<div class="t" style="left:994.5px;top:313.10px;font-size:6px;line-height:7.20px;color:#777;">I</div>
<div class="t" style="left:509.5px;top:339.08px;font-size:8.7px;line-height:10.44px;color:#7a7a7a;">0</div>
<div class="t" style="left:577.5px;top:339.08px;font-size:8.7px;line-height:10.44px;color:#7a7a7a;">0</div>
<div class="t" style="left:712.5px;top:339.08px;font-size:8.7px;line-height:10.44px;color:#7a7a7a;">0</div>
<div class="t" style="left:847px;top:339.08px;font-size:8.7px;line-height:10.44px;color:#7a7a7a;">0</div>
<div class="t" style="left:915px;top:339.08px;font-size:8.7px;line-height:10.44px;color:#7a7a7a;">0</div>
<div class="t" style="left:1021px;top:339.80px;font-size:7px;line-height:8.40px;color:#5aaeee;">查看明细</div>
<div style="position:absolute;left:135px;top:339.50px;width:27px;height:12px;filter:blur(0.55px)"><div style="position:absolute;left:0;top:0;width:27px;height:7px;background:linear-gradient(to right,rgb(224,224,224) 0.0px,rgb(224,224,224) 6.8px,rgb(204,204,204) 6.8px,rgb(204,204,204) 13.5px,rgb(196,196,196) 13.5px,rgb(196,196,196) 20.2px,rgb(194,194,194) 20.2px,rgb(194,194,194) 27.0px)"></div><div style="position:absolute;left:0;top:7px;width:27px;height:5px;background:linear-gradient(to right,rgb(244,244,244) 0.0px,rgb(244,244,244) 6.8px,rgb(242,242,242) 6.8px,rgb(242,242,242) 13.5px,rgb(238,238,238) 13.5px,rgb(238,238,238) 20.2px,rgb(236,236,236) 20.2px,rgb(236,236,236) 27.0px)"></div></div>
<div style="position:absolute;left:200px;top:339.50px;width:24px;height:12px;filter:blur(0.55px)"><div style="position:absolute;left:0;top:0;width:24px;height:7px;background:linear-gradient(to right,rgb(217,217,217) 0.0px,rgb(217,217,217) 8.0px,rgb(200,200,200) 8.0px,rgb(200,200,200) 16.0px,rgb(207,207,207) 16.0px,rgb(207,207,207) 24.0px)"></div><div style="position:absolute;left:0;top:7px;width:24px;height:5px;background:linear-gradient(to right,rgb(245,245,245) 0.0px,rgb(245,245,245) 8.0px,rgb(244,244,244) 8.0px,rgb(244,244,244) 16.0px,rgb(242,242,242) 16.0px,rgb(242,242,242) 24.0px)"></div></div>
<div style="position:absolute;left:290.5px;top:339.50px;width:26.5px;height:12px;filter:blur(0.55px)"><div style="position:absolute;left:0;top:0;width:26.5px;height:7px;background:linear-gradient(to right,rgb(214,214,214) 0.0px,rgb(214,214,214) 6.6px,rgb(209,209,209) 6.6px,rgb(209,209,209) 13.2px,rgb(196,196,196) 13.2px,rgb(196,196,196) 19.9px,rgb(208,208,208) 19.9px,rgb(208,208,208) 26.5px)"></div><div style="position:absolute;left:0;top:7px;width:26.5px;height:5px;background:linear-gradient(to right,rgb(244,244,244) 0.0px,rgb(244,244,244) 6.6px,rgb(236,236,236) 6.6px,rgb(236,236,236) 13.2px,rgb(243,243,243) 13.2px,rgb(243,243,243) 19.9px,rgb(238,238,238) 19.9px,rgb(238,238,238) 26.5px)"></div></div>
<div style="position:absolute;left:358px;top:339.50px;width:47px;height:12px;filter:blur(0.55px)"><div style="position:absolute;left:0;top:0;width:47px;height:7px;background:linear-gradient(to right,rgb(224,224,224) 0.0px,rgb(224,224,224) 6.7px,rgb(204,204,204) 6.7px,rgb(204,204,204) 13.4px,rgb(205,205,205) 13.4px,rgb(205,205,205) 20.1px,rgb(204,204,204) 20.1px,rgb(204,204,204) 26.9px,rgb(215,215,215) 26.9px,rgb(215,215,215) 33.6px,rgb(203,203,203) 33.6px,rgb(203,203,203) 40.3px,rgb(201,201,201) 40.3px,rgb(201,201,201) 47.0px)"></div><div style="position:absolute;left:0;top:7px;width:47px;height:5px;background:linear-gradient(to right,rgb(241,241,241) 0.0px,rgb(241,241,241) 6.7px,rgb(246,246,246) 6.7px,rgb(246,246,246) 13.4px,rgb(244,244,244) 13.4px,rgb(244,244,244) 20.1px,rgb(244,244,244) 20.1px,rgb(244,244,244) 26.9px,rgb(244,244,244) 26.9px,rgb(244,244,244) 33.6px,rgb(243,243,243) 33.6px,rgb(243,243,243) 40.3px,rgb(237,237,237) 40.3px,rgb(237,237,237) 47.0px)"></div></div>
<div style="position:absolute;left:439px;top:339.50px;width:13px;height:12px;filter:blur(0.55px)"><div style="position:absolute;left:0;top:0;width:13px;height:7px;background:linear-gradient(to right,rgb(215,215,215) 0.0px,rgb(215,215,215) 6.5px,rgb(199,199,199) 6.5px,rgb(199,199,199) 13.0px)"></div><div style="position:absolute;left:0;top:7px;width:13px;height:5px;background:linear-gradient(to right,rgb(239,239,239) 0.0px,rgb(239,239,239) 6.5px,rgb(239,239,239) 6.5px,rgb(239,239,239) 13.0px)"></div></div>
<div style="position:absolute;left:641px;top:339.50px;width:14px;height:12px;filter:blur(0.55px)"><div style="position:absolute;left:0;top:0;width:14px;height:7px;background:linear-gradient(to right,rgb(216,216,216) 0.0px,rgb(216,216,216) 7.0px,rgb(209,209,209) 7.0px,rgb(209,209,209) 14.0px)"></div><div style="position:absolute;left:0;top:7px;width:14px;height:5px;background:linear-gradient(to right,rgb(237,237,237) 0.0px,rgb(237,237,237) 7.0px,rgb(244,244,244) 7.0px,rgb(244,244,244) 14.0px)"></div></div>
<div style="position:absolute;left:776px;top:338.00px;width:14px;height:13px;filter:blur(0.55px)"><div style="position:absolute;left:0;top:0;width:14px;height:8px;background:linear-gradient(to right,rgb(225,225,225) 0.0px,rgb(225,225,225) 7.0px,rgb(226,226,226) 7.0px,rgb(226,226,226) 14.0px)"></div><div style="position:absolute;left:0;top:8px;width:14px;height:5px;background:linear-gradient(to right,rgb(236,236,236) 0.0px,rgb(236,236,236) 7.0px,rgb(237,237,237) 7.0px,rgb(237,237,237) 14.0px)"></div></div>
<div style="position:absolute;left:979px;top:339.50px;width:20px;height:12px;filter:blur(0.55px)"><div style="position:absolute;left:0;top:0;width:20px;height:7px;background:linear-gradient(to right,rgb(217,217,217) 0.0px,rgb(217,217,217) 6.7px,rgb(205,205,205) 6.7px,rgb(205,205,205) 13.3px,rgb(202,202,202) 13.3px,rgb(202,202,202) 20.0px)"></div><div style="position:absolute;left:0;top:7px;width:20px;height:5px;background:linear-gradient(to right,rgb(245,245,245) 0.0px,rgb(245,245,245) 6.7px,rgb(244,244,244) 6.7px,rgb(244,244,244) 13.3px,rgb(239,239,239) 13.3px,rgb(239,239,239) 20.0px)"></div></div>
<div class="t" style="left:509.5px;top:366.68px;font-size:8.7px;line-height:10.44px;color:#7a7a7a;">0</div>
<div class="t" style="left:577.5px;top:366.68px;font-size:8.7px;line-height:10.44px;color:#7a7a7a;">0</div>
<div class="t" style="left:712.5px;top:366.68px;font-size:8.7px;line-height:10.44px;color:#7a7a7a;">1</div>
<div class="t" style="left:847px;top:366.68px;font-size:8.7px;line-height:10.44px;color:#7a7a7a;">0</div>
<div class="t" style="left:915px;top:366.68px;font-size:8.7px;line-height:10.44px;color:#7a7a7a;">0</div>
<div class="t" style="left:1021px;top:367.40px;font-size:7px;line-height:8.40px;color:#5aaeee;">查看明细</div>
<div style="position:absolute;left:135px;top:365.60px;width:17px;height:13px;filter:blur(0.55px)"><div style="position:absolute;left:0;top:0;width:17px;height:8px;background:linear-gradient(to right,rgb(208,208,208) 0.0px,rgb(208,208,208) 8.5px,rgb(194,194,194) 8.5px,rgb(194,194,194) 17.0px)"></div><div style="position:absolute;left:0;top:8px;width:17px;height:5px;background:linear-gradient(to right,rgb(243,243,243) 0.0px,rgb(243,243,243) 8.5px,rgb(244,244,244) 8.5px,rgb(244,244,244) 17.0px)"></div></div>
<div style="position:absolute;left:203px;top:366.10px;width:43px;height:12px;filter:blur(0.55px)"><div style="position:absolute;left:0;top:0;width:43px;height:7px;background:linear-gradient(to right,rgb(224,224,224) 0.0px,rgb(224,224,224) 7.2px,rgb(201,201,201) 7.2px,rgb(201,201,201) 14.3px,rgb(202,202,202) 14.3px,rgb(202,202,202) 21.5px,rgb(193,193,193) 21.5px,rgb(193,193,193) 28.7px,rgb(208,208,208) 28.7px,rgb(208,208,208) 35.8px,rgb(202,202,202) 35.8px,rgb(202,202,202) 43.0px)"></div><div style="position:absolute;left:0;top:7px;width:43px;height:5px;background:linear-gradient(to right,rgb(240,240,240) 0.0px,rgb(240,240,240) 7.2px,rgb(244,244,244) 7.2px,rgb(244,244,244) 14.3px,rgb(239,239,239) 14.3px,rgb(239,239,239) 21.5px,rgb(243,243,243) 21.5px,rgb(243,243,243) 28.7px,rgb(238,238,238) 28.7px,rgb(238,238,238) 35.8px,rgb(242,242,242) 35.8px,rgb(242,242,242) 43.0px)"></div></div>
<div style="position:absolute;left:290.5px;top:367.10px;width:26.5px;height:12px;filter:blur(0.55px)"><div style="position:absolute;left:0;top:0;width:26.5px;height:7px;background:linear-gradient(to right,rgb(218,218,218) 0.0px,rgb(218,218,218) 6.6px,rgb(206,206,206) 6.6px,rgb(206,206,206) 13.2px,rgb(202,202,202) 13.2px,rgb(202,202,202) 19.9px,rgb(194,194,194) 19.9px,rgb(194,194,194) 26.5px)"></div><div style="position:absolute;left:0;top:7px;width:26.5px;height:5px;background:linear-gradient(to right,rgb(246,246,246) 0.0px,rgb(246,246,246) 6.6px,rgb(239,239,239) 6.6px,rgb(239,239,239) 13.2px,rgb(242,242,242) 13.2px,rgb(242,242,242) 19.9px,rgb(237,237,237) 19.9px,rgb(237,237,237) 26.5px)"></div></div>
<div style="position:absolute;left:358px;top:367.10px;width:47px;height:12px;filter:blur(0.55px)"><div style="position:absolute;left:0;top:0;width:47px;height:7px;background:linear-gradient(to right,rgb(222,222,222) 0.0px,rgb(222,222,222) 6.7px,rgb(209,209,209) 6.7px,rgb(209,209,209) 13.4px,rgb(203,203,203) 13.4px,rgb(203,203,203) 20.1px,rgb(204,204,204) 20.1px,rgb(204,204,204) 26.9px,rgb(211,211,211) 26.9px,rgb(211,211,211) 33.6px,rgb(204,204,204) 33.6px,rgb(204,204,204) 40.3px,rgb(208,208,208) 40.3px,rgb(208,208,208) 47.0px)"></div><div style="position:absolute;left:0;top:7px;width:47px;height:5px;background:linear-gradient(to right,rgb(238,238,238) 0.0px,rgb(238,238,238) 6.7px,rgb(243,243,243) 6.7px,rgb(243,243,243) 13.4px,rgb(239,239,239) 13.4px,rgb(239,239,239) 20.1px,rgb(237,237,237) 20.1px,rgb(237,237,237) 26.9px,rgb(242,242,242) 26.9px,rgb(242,242,242) 33.6px,rgb(243,243,243) 33.6px,rgb(243,243,243) 40.3px,rgb(238,238,238) 40.3px,rgb(238,238,238) 47.0px)"></div></div>
<div style="position:absolute;left:439px;top:367.10px;width:13px;height:12px;filter:blur(0.55px)"><div style="position:absolute;left:0;top:0;width:13px;height:7px;background:linear-gradient(to right,rgb(219,219,219) 0.0px,rgb(219,219,219) 6.5px,rgb(205,205,205) 6.5px,rgb(205,205,205) 13.0px)"></div><div style="position:absolute;left:0;top:7px;width:13px;height:5px;background:linear-gradient(to right,rgb(238,238,238) 0.0px,rgb(238,238,238) 6.5px,rgb(242,242,242) 6.5px,rgb(242,242,242) 13.0px)"></div></div>
<div style="position:absolute;left:648px;top:366.60px;width:7px;height:11px;filter:blur(0.55px)"><div style="position:absolute;left:0;top:0;width:7px;height:6px;background:linear-gradient(to right,rgb(226,226,226) 0.0px,rgb(226,226,226) 7.0px)"></div></div>
<div class="t" style="left:644px;top:366.68px;font-size:8.7px;line-height:10.44px;color:#7a7a7a;">(</div>
<div style="position:absolute;left:776px;top:365.10px;width:20px;height:14px;filter:blur(0.55px)"><div style="position:absolute;left:0;top:0;width:20px;height:9px;background:linear-gradient(to right,rgb(217,217,217) 0.0px,rgb(217,217,217) 6.7px,rgb(199,199,199) 6.7px,rgb(199,199,199) 13.3px,rgb(192,192,192) 13.3px,rgb(192,192,192) 20.0px)"></div><div style="position:absolute;left:0;top:9px;width:20px;height:5px;background:linear-gradient(to right,rgb(241,241,241) 0.0px,rgb(241,241,241) 6.7px,rgb(241,241,241) 6.7px,rgb(241,241,241) 13.3px,rgb(237,237,237) 13.3px,rgb(237,237,237) 20.0px)"></div></div>
<div style="position:absolute;left:979px;top:365.10px;width:20px;height:14px;filter:blur(0.55px)"><div style="position:absolute;left:0;top:0;width:20px;height:9px;background:linear-gradient(to right,rgb(217,217,217) 0.0px,rgb(217,217,217) 6.7px,rgb(186,186,186) 6.7px,rgb(186,186,186) 13.3px,rgb(196,196,196) 13.3px,rgb(196,196,196) 20.0px)"></div><div style="position:absolute;left:0;top:9px;width:20px;height:5px;background:linear-gradient(to right,rgb(244,244,244) 0.0px,rgb(244,244,244) 6.7px,rgb(243,243,243) 6.7px,rgb(243,243,243) 13.3px,rgb(243,243,243) 13.3px,rgb(243,243,243) 20.0px)"></div></div>
<div class="t" style="left:509.5px;top:394.28px;font-size:8.7px;line-height:10.44px;color:#7a7a7a;">0</div>
<div class="t" style="left:577.5px;top:394.28px;font-size:8.7px;line-height:10.44px;color:#7a7a7a;">0</div>
<div class="t" style="left:712.5px;top:394.28px;font-size:8.7px;line-height:10.44px;color:#7a7a7a;">0</div>
<div class="t" style="left:847px;top:394.28px;font-size:8.7px;line-height:10.44px;color:#7a7a7a;">0</div>
<div class="t" style="left:915px;top:394.28px;font-size:8.7px;line-height:10.44px;color:#7a7a7a;">0</div>
<div class="t" style="left:1021px;top:395.00px;font-size:7px;line-height:8.40px;color:#5aaeee;">查看明细</div>
<div style="position:absolute;left:135px;top:394.70px;width:27px;height:12px;filter:blur(0.55px)"><div style="position:absolute;left:0;top:0;width:27px;height:7px;background:linear-gradient(to right,rgb(212,212,212) 0.0px,rgb(212,212,212) 6.8px,rgb(198,198,198) 6.8px,rgb(198,198,198) 13.5px,rgb(196,196,196) 13.5px,rgb(196,196,196) 20.2px,rgb(202,202,202) 20.2px,rgb(202,202,202) 27.0px)"></div><div style="position:absolute;left:0;top:7px;width:27px;height:5px;background:linear-gradient(to right,rgb(245,245,245) 0.0px,rgb(245,245,245) 6.8px,rgb(240,240,240) 6.8px,rgb(240,240,240) 13.5px,rgb(244,244,244) 13.5px,rgb(244,244,244) 20.2px,rgb(237,237,237) 20.2px,rgb(237,237,237) 27.0px)"></div></div>
<div style="position:absolute;left:203px;top:393.70px;width:43px;height:12px;filter:blur(0.55px)"><div style="position:absolute;left:0;top:0;width:43px;height:7px;background:linear-gradient(to right,rgb(224,224,224) 0.0px,rgb(224,224,224) 7.2px,rgb(193,193,193) 7.2px,rgb(193,193,193) 14.3px,rgb(189,189,189) 14.3px,rgb(189,189,189) 21.5px,rgb(188,188,188) 21.5px,rgb(188,188,188) 28.7px,rgb(194,194,194) 28.7px,rgb(194,194,194) 35.8px,rgb(194,194,194) 35.8px,rgb(194,194,194) 43.0px)"></div><div style="position:absolute;left:0;top:7px;width:43px;height:5px;background:linear-gradient(to right,rgb(236,236,236) 0.0px,rgb(236,236,236) 7.2px,rgb(238,238,238) 7.2px,rgb(238,238,238) 14.3px,rgb(240,240,240) 14.3px,rgb(240,240,240) 21.5px,rgb(238,238,238) 21.5px,rgb(238,238,238) 28.7px,rgb(242,242,242) 28.7px,rgb(242,242,242) 35.8px,rgb(246,246,246) 35.8px,rgb(246,246,246) 43.0px)"></div></div>
<div style="position:absolute;left:439px;top:392.70px;width:13px;height:14px;filter:blur(0.55px)"><div style="position:absolute;left:0;top:0;width:13px;height:9px;background:linear-gradient(to right,rgb(231,231,231) 0.0px,rgb(231,231,231) 6.5px,rgb(222,222,222) 6.5px,rgb(222,222,222) 13.0px)"></div><div style="position:absolute;left:0;top:9px;width:13px;height:5px;background:linear-gradient(to right,rgb(242,242,242) 0.0px,rgb(242,242,242) 6.5px,rgb(238,238,238) 6.5px,rgb(238,238,238) 13.0px)"></div></div>
<div class="t" style="left:644px;top:394.28px;font-size:8.7px;line-height:10.44px;color:#7a7a7a;">0</div>
<div style="position:absolute;left:776px;top:393.20px;width:14px;height:13px;filter:blur(0.55px)"><div style="position:absolute;left:0;top:0;width:14px;height:8px;background:linear-gradient(to right,rgb(226,226,226) 0.0px,rgb(226,226,226) 7.0px,rgb(232,232,232) 7.0px,rgb(232,232,232) 14.0px)"></div><div style="position:absolute;left:0;top:8px;width:14px;height:5px;background:linear-gradient(to right,rgb(244,244,244) 0.0px,rgb(244,244,244) 7.0px,rgb(245,245,245) 7.0px,rgb(245,245,245) 14.0px)"></div></div>
<div style="position:absolute;left:983px;top:395.20px;width:7px;height:11px;filter:blur(0.55px)"><div style="position:absolute;left:0;top:0;width:7px;height:6px;background:linear-gradient(to right,rgb(225,225,225) 0.0px,rgb(225,225,225) 7.0px)"></div></div>
<div class="t" style="left:981.5px;top:396.50px;font-size:5px;line-height:6.00px;color:#aaa;">\</div>
<div class="t" style="left:509.5px;top:425.23px;font-size:8.7px;line-height:10.44px;color:#7a7a7a;">0</div>
<div class="t" style="left:577.5px;top:425.23px;font-size:8.7px;line-height:10.44px;color:#7a7a7a;">0</div>
<div class="t" style="left:712.5px;top:425.23px;font-size:8.7px;line-height:10.44px;color:#7a7a7a;">0</div>
<div class="t" style="left:847px;top:425.23px;font-size:8.7px;line-height:10.44px;color:#7a7a7a;">0</div>
<div class="t" style="left:915px;top:425.23px;font-size:8.7px;line-height:10.44px;color:#7a7a7a;">0</div>
<div class="t" style="left:1021px;top:425.95px;font-size:7px;line-height:8.40px;color:#5aaeee;">查看明细</div>
<div style="position:absolute;left:135px;top:426.65px;width:20px;height:10px;filter:blur(0.55px)"><div style="position:absolute;left:0;top:0;width:20px;height:5px;background:linear-gradient(to right,rgb(217,217,217) 0.0px,rgb(217,217,217) 6.7px,rgb(188,188,188) 6.7px,rgb(188,188,188) 13.3px,rgb(194,194,194) 13.3px,rgb(194,194,194) 20.0px)"></div><div style="position:absolute;left:0;top:5px;width:20px;height:5px;background:linear-gradient(to right,rgb(236,236,236) 0.0px,rgb(236,236,236) 6.7px,rgb(238,238,238) 6.7px,rgb(238,238,238) 13.3px,rgb(242,242,242) 13.3px,rgb(242,242,242) 20.0px)"></div></div>
<div style="position:absolute;left:201px;top:422.15px;width:82px;height:11px;filter:blur(0.55px)"><div style="position:absolute;left:0;top:0;width:82px;height:6px;background:linear-gradient(to right,rgb(216,216,216) 0.0px,rgb(216,216,216) 6.8px,rgb(186,186,186) 6.8px,rgb(186,186,186) 13.7px,rgb(206,206,206) 13.7px,rgb(206,206,206) 20.5px,rgb(188,188,188) 20.5px,rgb(188,188,188) 27.3px,rgb(211,211,211) 27.3px,rgb(211,211,211) 34.2px,rgb(194,194,194) 34.2px,rgb(194,194,194) 41.0px,rgb(188,188,188) 41.0px,rgb(188,188,188) 47.8px,rgb(205,205,205) 47.8px,rgb(205,205,205) 54.7px,rgb(193,193,193) 54.7px,rgb(193,193,193) 61.5px,rgb(188,188,188) 61.5px,rgb(188,188,188) 68.3px,rgb(194,194,194) 68.3px,rgb(194,194,194) 75.2px,rgb(189,189,189) 75.2px,rgb(189,189,189) 82.0px)"></div></div>
<div style="position:absolute;left:201px;top:430.15px;width:14px;height:11px;filter:blur(0.55px)"><div style="position:absolute;left:0;top:0;width:14px;height:6px;background:linear-gradient(to right,rgb(200,200,200) 0.0px,rgb(200,200,200) 7.0px,rgb(186,186,186) 7.0px,rgb(186,186,186) 14.0px)"></div><div style="position:absolute;left:0;top:6px;width:14px;height:5px;background:linear-gradient(to right,rgb(241,241,241) 0.0px,rgb(241,241,241) 7.0px,rgb(244,244,244) 7.0px,rgb(244,244,244) 14.0px)"></div></div>
<div style="position:absolute;left:439px;top:427.15px;width:11px;height:9px;filter:blur(0.55px)"><div style="position:absolute;left:0;top:0;width:11px;height:4px;background:linear-gradient(to right,rgb(199,199,199) 0.0px,rgb(199,199,199) 5.5px,rgb(194,194,194) 5.5px,rgb(194,194,194) 11.0px)"></div><div style="position:absolute;left:0;top:4px;width:11px;height:5px;background:linear-gradient(to right,rgb(245,245,245) 0.0px,rgb(245,245,245) 5.5px,rgb(238,238,238) 5.5px,rgb(238,238,238) 11.0px)"></div></div>
<div style="position:absolute;left:648px;top:425.65px;width:7px;height:10px;filter:blur(0.55px)"><div style="position:absolute;left:0;top:0;width:7px;height:5px;background:linear-gradient(to right,rgb(218,218,218) 0.0px,rgb(218,218,218) 7.0px)"></div></div>
<div class="t" style="left:644px;top:425.23px;font-size:8.7px;line-height:10.44px;color:#7a7a7a;">(</div>
<div style="position:absolute;left:776px;top:427.15px;width:14px;height:9px;filter:blur(0.55px)"><div style="position:absolute;left:0;top:0;width:14px;height:4px;background:linear-gradient(to right,rgb(202,202,202) 0.0px,rgb(202,202,202) 7.0px,rgb(208,208,208) 7.0px,rgb(208,208,208) 14.0px)"></div><div style="position:absolute;left:0;top:4px;width:14px;height:5px;background:linear-gradient(to right,rgb(239,239,239) 0.0px,rgb(239,239,239) 7.0px,rgb(237,237,237) 7.0px,rgb(237,237,237) 14.0px)"></div></div>
<div style="position:absolute;left:986px;top:425.65px;width:6px;height:10px;filter:blur(0.55px)"><div style="position:absolute;left:0;top:0;width:6px;height:5px;background:linear-gradient(to right,rgb(220,220,220) 0.0px,rgb(220,220,220) 6.0px)"></div></div>
<div class="t" style="left:982px;top:425.23px;font-size:8.7px;line-height:10.44px;color:#7a7a7a;">0</div>
<div class="b" style="left:1013px;top:109.5px;width:2px;height:371.5px;background:linear-gradient(to right,rgba(0,0,0,0.0),rgba(0,0,0,0.06));"></div>
<div class="b" style="left:1014.5px;top:446px;width:45.0px;height:35px;background:#fff;"></div>
<div class="b" style="left:1014.5px;top:446px;width:1.0px;height:35px;background:#eeeeee;"></div>
<div class="b" style="left:132.5px;top:483.5px;width:927.0px;height:8.5px;background:#f1f1f1;"></div>
<div class="b" style="left:141.5px;top:483.5px;width:443.5px;height:8.5px;background:#c1c1c1;"></div>
<svg style="left:135px;top:485.5px" width="4" height="4" viewBox="0 0 4 4"><path d="M3 0.5 L1 2 L3 3.5 Z" fill="#777"/></svg>
<svg style="left:1054px;top:485.5px" width="4" height="4" viewBox="0 0 4 4"><path d="M1 0.5 L3 2 L1 3.5 Z" fill="#333"/></svg>
<div class="t" style="left:328.5px;top:512.30px;font-size:7px;line-height:8.40px;color:#a4a4a4;">共 20 条</div>
<div class="b" style="left:374.5px;top:507.5px;width:60.5px;height:17.5px;border:1px solid #ededed;border-radius:2px;"></div>
<div class="t" style="left:388px;top:512.60px;font-size:7px;line-height:8.40px;color:#a8a8a8;">10条/页</div>
<svg style="left:421px;top:515px" width="5" height="3" viewBox="0 0 5 3"><path d="M0.5 0.5 L2.5 2.5 L4.5 0.5" stroke="#bbb" stroke-width="0.6" fill="none"/></svg>
<div class="b" style="left:495px;top:508px;width:16.5px;height:16px;border:1px solid #eeeeee;border-radius:1px;"></div>
<svg style="left:501px;top:513px" width="4" height="6" viewBox="0 0 4 6"><path d="M3 0.5 L1 3 L3 5.5" stroke="#aaa" stroke-width="0.7" fill="none"/></svg>
<div class="b" style="left:517.5px;top:508px;width:16.5px;height:16px;background:#42b0f2;border-radius:1px;"></div>
<div class="t" style="left:523.5px;top:512.30px;font-size:7.5px;line-height:9.00px;color:#fff;">1</div>
<div class="b" style="left:539.5px;top:508px;width:17.0px;height:16px;border:1px solid #eeeeee;border-radius:1px;"></div>
<div class="t" style="left:545.5px;top:512.30px;font-size:7.5px;line-height:9.00px;color:#999;">2</div>
<div class="b" style="left:562.5px;top:508px;width:16.5px;height:16px;border:1px solid #eeeeee;border-radius:1px;"></div>
<svg style="left:569px;top:513px" width="4" height="6" viewBox="0 0 4 6"><path d="M1 0.5 L3 3 L1 5.5" stroke="#aaa" stroke-width="0.7" fill="none"/></svg>
<div class="t" style="left:648.5px;top:512.60px;font-size:7px;line-height:8.40px;color:#a4a4a4;">前往</div>
<div class="b" style="left:665px;top:508.5px;width:61.5px;height:16.0px;border:1px solid #ededed;border-radius:2px;"></div>
<div class="t" style="left:694px;top:512.30px;font-size:7.5px;line-height:9.00px;color:#888;">1</div>
</div></div></body></html>
